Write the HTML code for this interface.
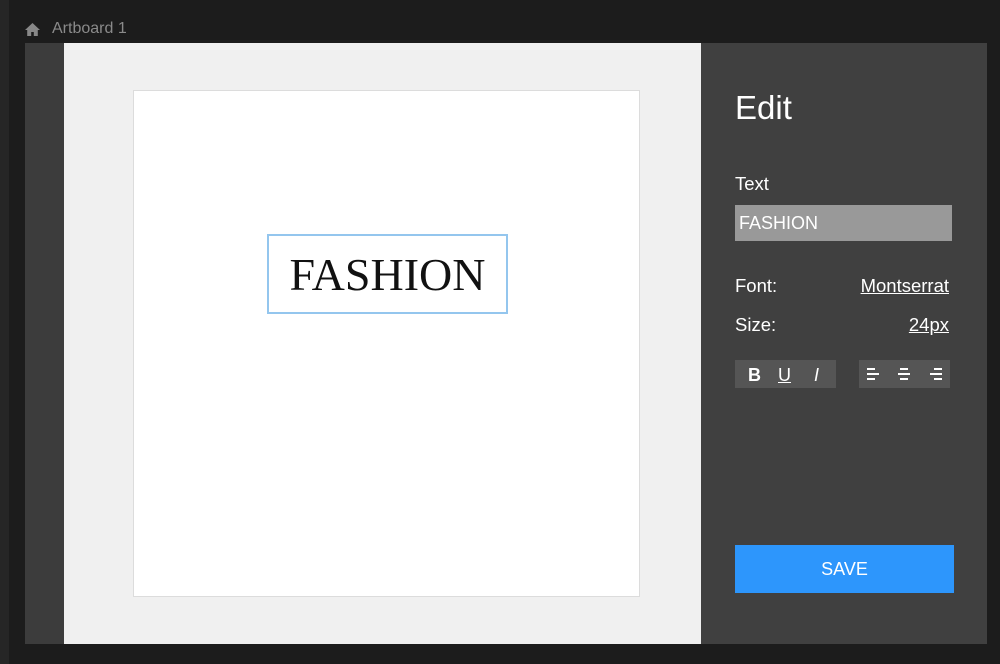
<!DOCTYPE html>
<html><head><style>
body{margin:0;width:1000px;height:664px;background:#1c1c1c;position:relative;overflow:hidden;font-family:"Liberation Sans",Arial,sans-serif}
div{position:absolute;box-sizing:border-box}
.lbl{color:#fff;font-size:18.5px}
.link{color:#fff;font-size:18.5px;text-decoration:underline;text-align:right}
</style></head><body>
<div style="left:0;top:0;width:9px;height:664px;background:#262626"></div>
<svg style="position:absolute;left:24px;top:22px" width="17" height="15" viewBox="0 0 17 15"><path d="M8.5 1L1 8h2.2v6h4v-4h2.6v4h4V8H16z" fill="#888"/></svg>
<div style="left:52px;top:20px;color:#8a8a8a;font-size:16px">Artboard 1</div>
<div style="left:25px;top:43px;width:962px;height:601px;background:#3c3c3c"></div>
<div style="left:64px;top:43px;width:637px;height:601px;background:#f0f0f0"></div>
<div style="left:133px;top:90px;width:507px;height:507px;background:#fff;border:1px solid #dcdcdc"></div>
<div style="left:267px;top:234px;width:241px;height:80px;border:2px solid #94c6ee;display:flex;align-items:center;justify-content:center;font-family:'Liberation Serif',serif;font-size:46px;color:#111">FASHION</div>
<div style="left:701px;top:43px;width:286px;height:601px;background:#404040"></div>
<div style="left:735px;top:89px;color:#fff;font-size:33px">Edit</div>
<div class="lbl" style="left:735px;top:173px">Text</div>
<div style="left:735px;top:205px;width:217px;height:36px;background:#999;color:#fff;font-size:18px;padding:8px 0 0 4px">FASHION</div>
<div class="lbl" style="left:735px;top:275px">Font:</div>
<div class="link" style="left:800px;width:149px;top:275px">Montserrat</div>
<div class="lbl" style="left:735px;top:314px">Size:</div>
<div class="link" style="left:800px;width:149px;top:314px">24px</div>
<div style="left:735px;top:360px;width:101px;height:28px;background:#555;color:#fff;font-size:18px">
<span style="position:absolute;left:13px;top:5px;font-weight:bold">B</span>
<span style="position:absolute;left:43px;top:5px;text-decoration:underline">U</span>
<span style="position:absolute;left:79px;top:5px;font-style:italic">I</span></div>
<div style="left:859px;top:360px;width:91px;height:28px;background:#555">
<svg width="91" height="28"><g fill="#fff">
<rect x="8" y="8" width="8" height="2"/><rect x="8" y="13" width="12" height="2"/><rect x="8" y="18" width="8" height="2"/>
<rect x="41" y="8" width="8" height="2"/><rect x="39" y="13" width="12" height="2"/><rect x="41" y="18" width="8" height="2"/>
<rect x="75" y="8" width="8" height="2"/><rect x="71" y="13" width="12" height="2"/><rect x="75" y="18" width="8" height="2"/></g></svg></div>
<div style="left:735px;top:545px;width:219px;height:48px;background:#2d96fc;color:#fff;font-size:18px;text-align:center;line-height:48px">SAVE</div>
</body></html>
